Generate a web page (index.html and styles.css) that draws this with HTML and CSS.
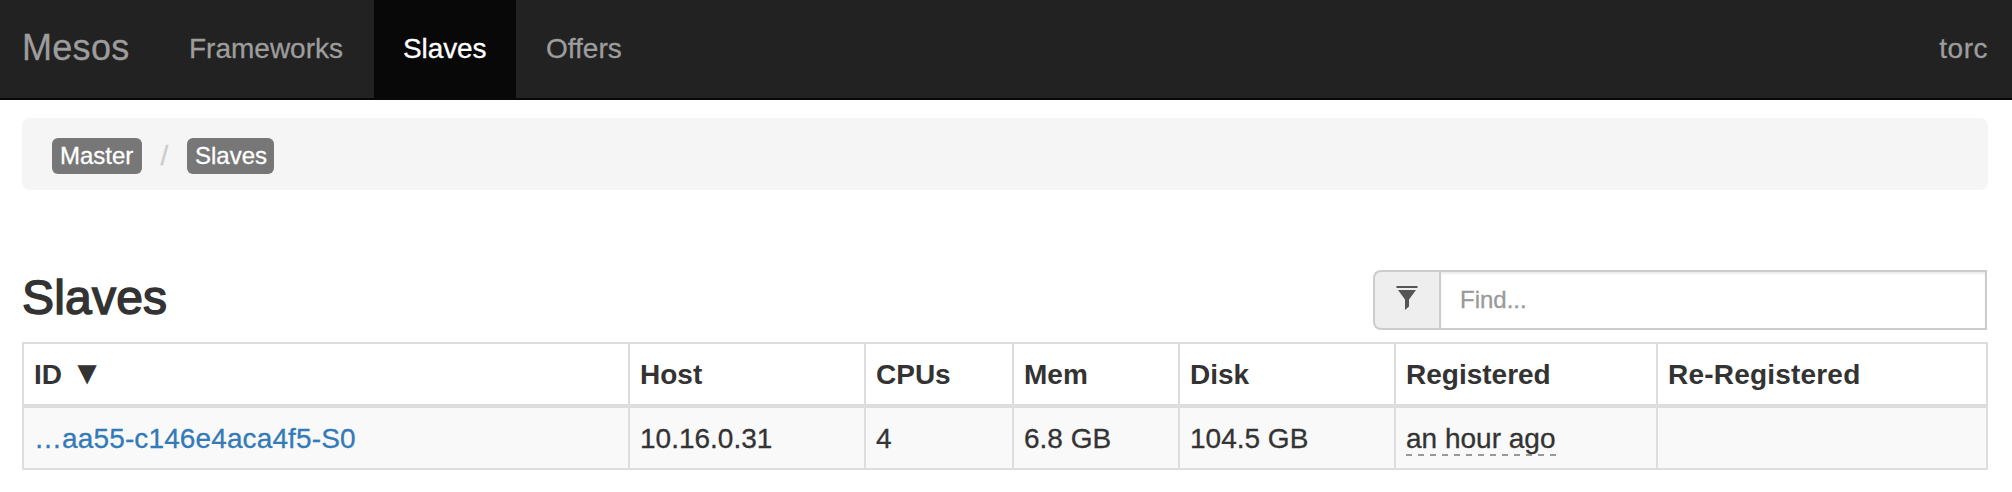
FILE: index.html
```html
<!DOCTYPE html>
<html lang="en">
<head>
<meta charset="utf-8">
<title>Mesos - Slaves</title>
<link rel="stylesheet" href="styles.css">
</head>
<body>
<nav class="navbar">
  <a class="brand">Mesos</a>
  <a class="tab">Frameworks</a>
  <a class="tab active">Slaves</a>
  <a class="tab">Offers</a>
  <span class="cluster">torc</span>
</nav>
<main class="container">
  <div class="breadcrumb">
    <span class="badge">Master</span>
    <span class="slash">/</span>
    <span class="badge">Slaves</span>
  </div>
  <div class="toolbar">
    <h2 class="title">Slaves</h2>
    <div class="search">
      <span class="addon"><svg class="filter" viewBox="0 0 22 24" width="22" height="24"><path d="M0.5 0H21.5V2H0.5ZM2 4H20L13 13.5V20.5L9 24V13.5Z" fill="#555"/></svg></span>
      <input class="find" type="text" placeholder="Find...">
    </div>
  </div>
  <table class="table">
    <colgroup><col class="c-id"><col class="c-host"><col class="c-cpus"><col class="c-mem"><col class="c-disk"><col class="c-reg"><col class="c-rereg"></colgroup>
    <thead>
      <tr><th>ID <span class="sort">▼</span></th><th>Host</th><th>CPUs</th><th>Mem</th><th>Disk</th><th>Registered</th><th class="wide">Re-Registered</th></tr>
    </thead>
    <tbody>
      <tr><td><a class="link">…aa55-c146e4aca4f5-S0</a></td><td>10.16.0.31</td><td>4</td><td>6.8 GB</td><td>104.5 GB</td><td><span class="time">an hour ago</span></td><td></td></tr>
    </tbody>
  </table>
</main>
</body>
</html>
```
FILE: styles.css
```css
* { box-sizing: border-box; }
body {
  margin: 0;
  background: #fff;
  color: #333;
  font: 28px/40px "Liberation Sans", Arial, sans-serif;
  -webkit-text-stroke: .3px currentColor;
}
.navbar {
  display: flex;
  height: 100px;
  padding-right: 24px;
  background: #222;
  border-bottom: 2px solid #080808;
  color: #9d9d9d;
  line-height: 98px;
}
.brand { width: 159px; padding-left: 22px; font-size: 36px; line-height: 96px; letter-spacing: .3px; }
.tab { padding: 0 30px; }
.tab:nth-child(2) { width: 215px; }
.active { width: 142px; padding-left: 29px; background: #080808; color: #fff; letter-spacing: -.1px; }
.cluster { margin-left: auto; letter-spacing: .5px; }
.container { padding: 18px 24px 0 22px; }
.breadcrumb {
  display: flex;
  align-items: center;
  height: 72px;
  padding: 4px 30px 0;
  background: #f5f5f5;
  border-radius: 8px;
  font-size: 24px;
}
.badge {
  height: 36px;
  padding: 0 8px;
  border-radius: 6px;
  background: #777;
  color: #fff;
  line-height: 35px;
}
.badge:first-child { width: 90px; }
.badge:last-child { width: 87px; }
.slash { width: 45px; color: #ccc; font-size: 28px; line-height: 32px; text-align: center; }
.toolbar {
  display: flex;
  justify-content: space-between;
  height: 72px;
  margin-top: 80px;
  padding-right: 1px;
}
.title {
  margin: 0;
  font-size: 48px;
  font-weight: 400;
  line-height: 56px;
  letter-spacing: .2px;
  -webkit-text-stroke: 1.5px #333;
}
.search { display: flex; width: 614px; height: 60px; }
.addon {
  display: flex;
  width: 66px;
  padding: 14px 0 0 21px;
  border: 2px solid #ccc;
  border-right: 0;
  border-radius: 8px 0 0 8px;
  background: #eee;
}
.find {
  flex: 1;
  min-width: 0;
  padding: 0 19px;
  border: 2px solid #ccc;
  background: #fff;
  box-shadow: inset 0 2px 2px rgba(0, 0, 0, .075);
  font: 24px "Liberation Sans", Arial, sans-serif;
}
.find::placeholder { color: #999; }
.table {
  width: 1966px;
  table-layout: fixed;
  border-collapse: separate;
  border-spacing: 0;
  border-right: 2px solid #ddd;
}
.c-id { width: 606px; }
.c-host { width: 236px; }
.c-cpus { width: 148px; }
.c-mem { width: 166px; }
.c-disk { width: 216px; }
.c-reg { width: 262px; }
.c-rereg { width: 330px; }
th, td { padding: 0 10px; border-left: 2px solid #ddd; text-align: left; white-space: nowrap; }
th { height: 66px; padding-top: 1px; border-top: 2px solid #ddd; border-bottom: 4px solid #ddd; -webkit-text-stroke: 0; }
td { height: 62px; padding-top: 1px; border-bottom: 2px solid #ddd; background: #f9f9f9; }
.wide { letter-spacing: .2px; }
.sort { margin-left: 1px; font-size: 33px; line-height: 0; }
.link { color: #337ab7; letter-spacing: .12px; }
.time {
  display: block;
  width: 150px;
  height: 40px;
  background: repeating-linear-gradient(90deg, #999 0 6px, transparent 6px 12px) 0 35px / 100% 2px no-repeat;
}
```
